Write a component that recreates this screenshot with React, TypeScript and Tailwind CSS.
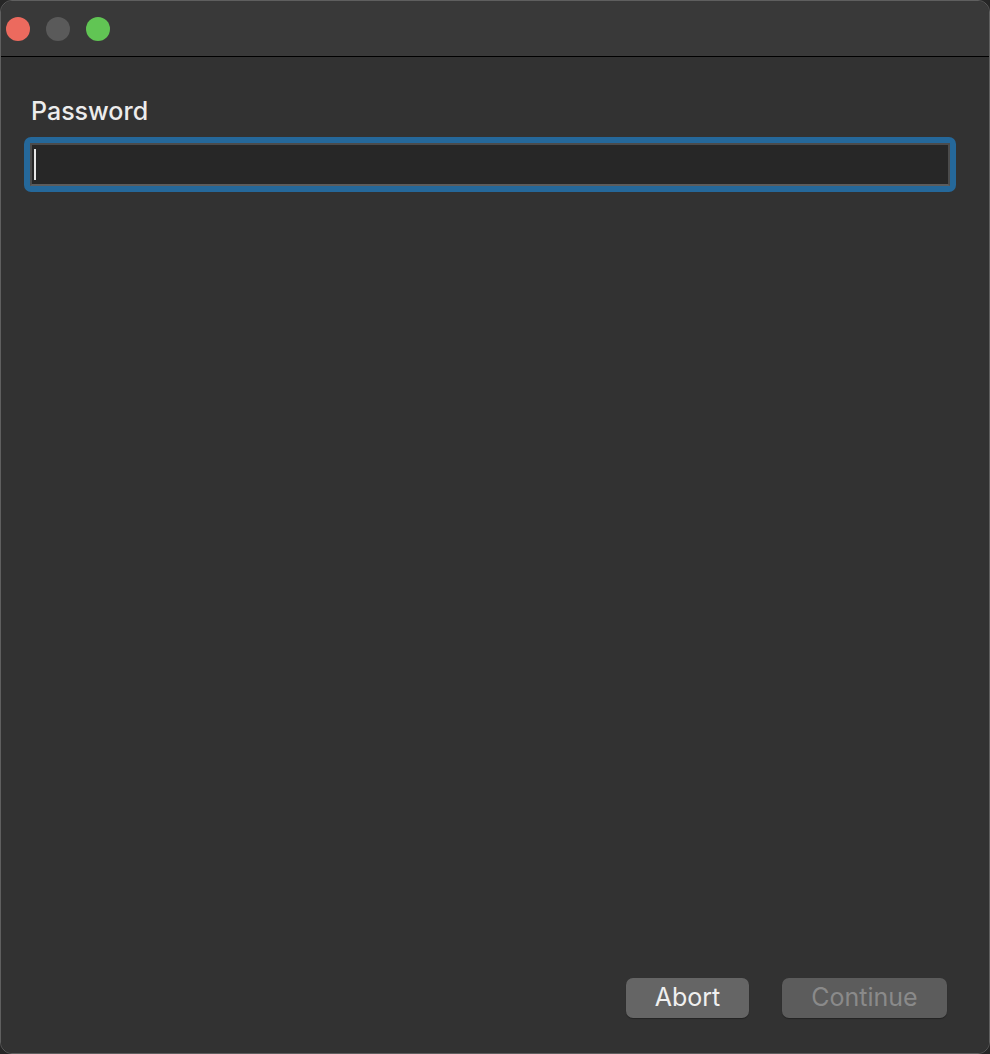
import { useState } from 'react';

// Ventana de diálogo de contraseña (estilo macOS, modo oscuro).
export default function App() {
  const [password, setPassword] = useState('');

  return (
    <div className="h-[1054px] w-[990px] bg-[#262626]" style={{ fontFamily: 'Inter, "Liberation Sans", sans-serif' }}>
      <div className="flex h-full w-full flex-col overflow-hidden rounded-[12px] border border-[#5f5f5f]">
        <div className="flex h-[56px] shrink-0 items-center gap-4 border-b border-black bg-[#393939] pl-[5px]">
          <span className="h-6 w-6 rounded-full bg-[#ec6a5e]" />
          <span className="h-6 w-6 rounded-full bg-[#5a5a5a]" />
          <span className="h-6 w-6 rounded-full bg-[#61c554]" />
        </div>

        <div className="flex flex-1 flex-col bg-[#323232] pt-[39px] pr-[33px] pb-[35px] pl-[23px]">
          <label className="ml-[7px] text-[25px] leading-[30px] font-medium text-[#ececec]">Password</label>
          <div className="mt-[11px] rounded-[7px] bg-[#25689a] p-[6px]">
            <div className="flex h-[43px] items-center border-2 border-[#4b4b4b] border-b-[#5c5c5c] bg-[#272727] pl-[2px]">
              <span className="h-[31px] w-[2px] bg-[#e6e6e6]" />
              <input
                type="password"
                value={password}
                onChange={(e) => setPassword(e.target.value)}
                className="h-full flex-1 bg-transparent text-[22px] text-white outline-none"
              />
            </div>
          </div>

          <div className="mt-auto flex justify-end gap-[33px] pr-[9px]">
            <button className="h-10 w-[123px] rounded-[7px] bg-[#656565] text-[25px] text-[#f0f0f0] shadow-[0_1px_1px_rgba(0,0,0,0.3)]">
              Abort
            </button>
            <button
              disabled
              className="h-10 w-[165px] rounded-[7px] bg-[#5c5c5c] text-[25px] text-[#8a8a8a] shadow-[0_1px_1px_rgba(0,0,0,0.3)]"
            >
              Continue
            </button>
          </div>
        </div>
      </div>
    </div>
  );
}
